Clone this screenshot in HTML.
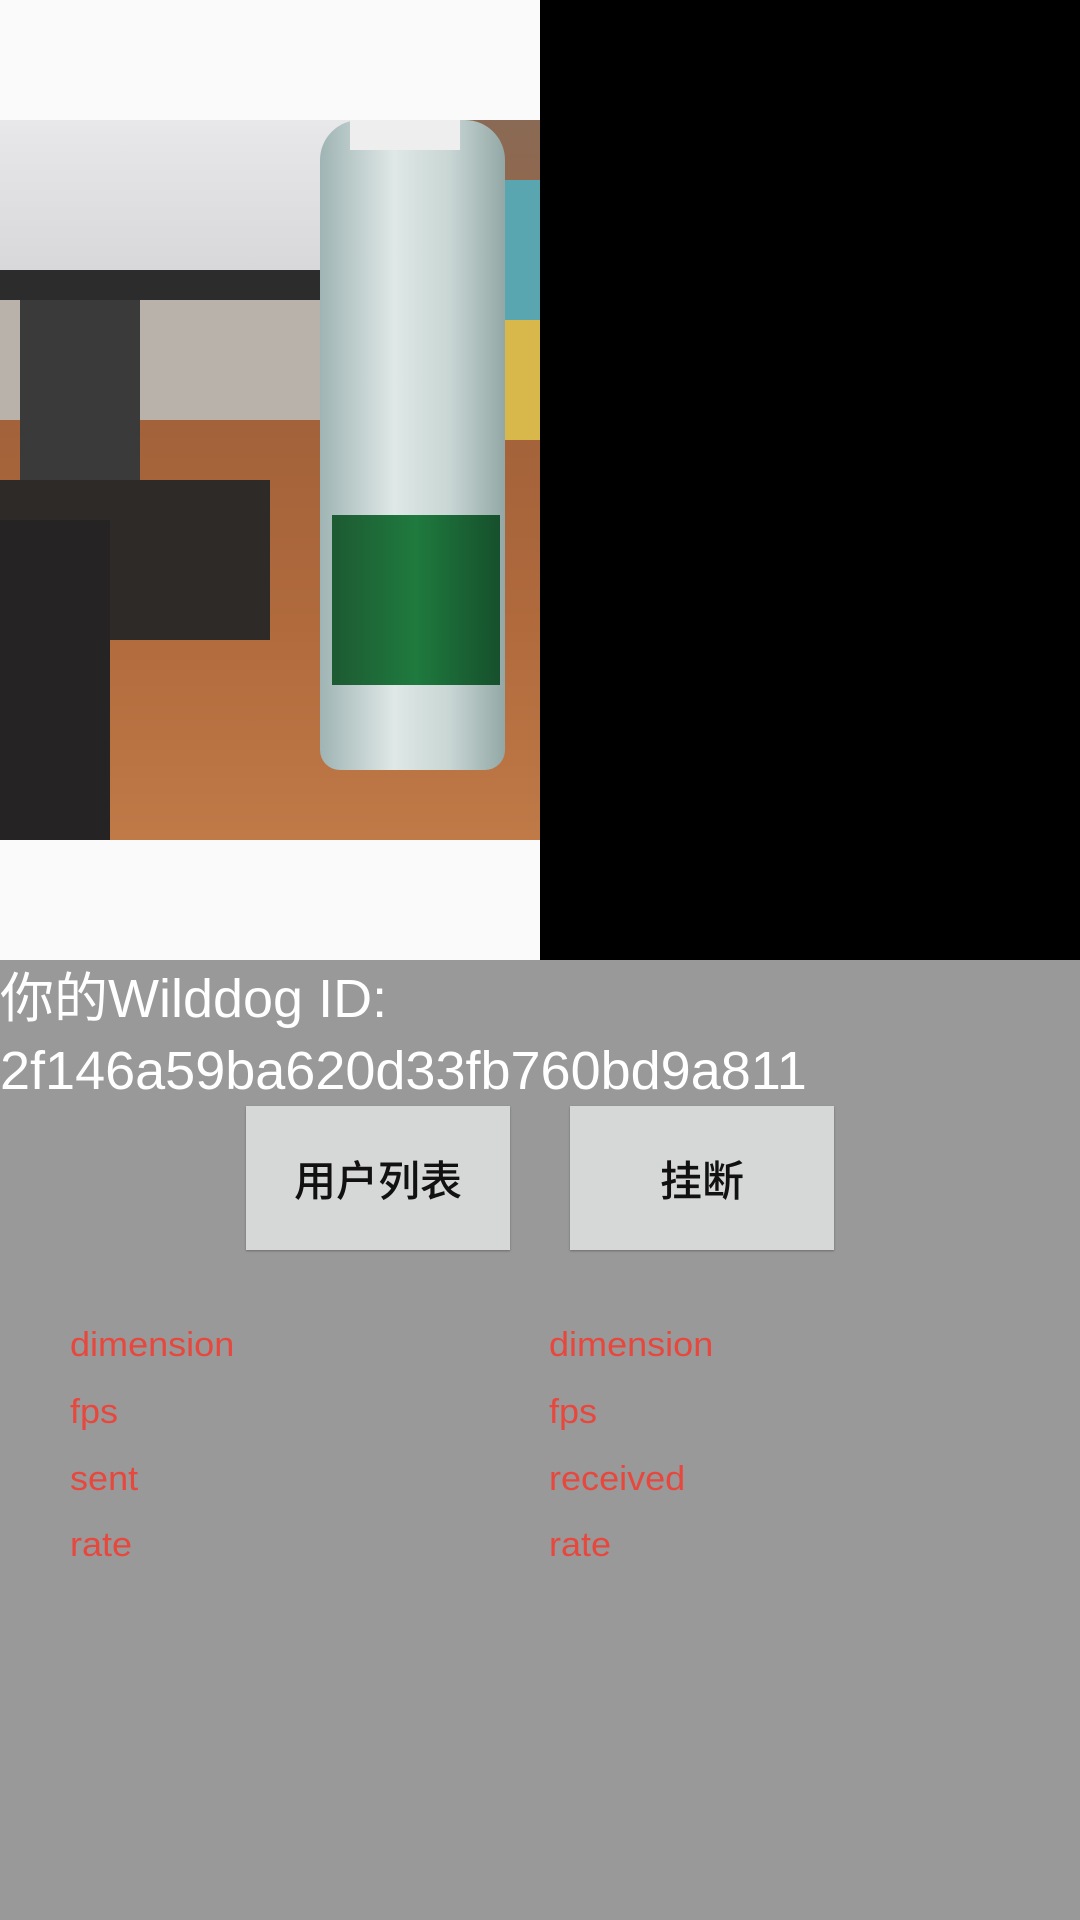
<!DOCTYPE html>
<html><head><meta charset="utf-8"><style>
html,body{margin:0;padding:0;}
body{width:1080px;height:1920px;background:#999999;position:relative;overflow:hidden;font-family:"Liberation Sans","Noto Sans CJK SC",sans-serif;}
.a{position:absolute;}
.id{position:absolute;left:0;color:#fff;font-size:54px;white-space:nowrap;line-height:1;}
.btn{position:absolute;top:1106px;width:264px;height:144px;background:#d6d7d7;box-shadow:0 1px 2px rgba(0,0,0,.3);color:#111;font-size:42px;font-weight:500;display:flex;align-items:center;justify-content:center;font-family:"Noto Sans CJK SC",sans-serif;}
.s{position:absolute;color:#e8473d;font-size:34px;line-height:1;white-space:nowrap;transform-origin:0 0;transform:scaleX(1.06);}
</style></head><body>
<div class="a" style="left:0;top:0;width:540px;height:960px;background:#fafafa"></div>
<div class="a" style="left:540px;top:0;width:540px;height:960px;background:#000"></div>
<div class="a" style="left:0;top:120px;width:540px;height:720px;overflow:hidden;background:linear-gradient(180deg,#8a6a55 0%,#a0603a 35%,#b06a3c 70%,#c07a48 100%)">
 <div class="a" style="left:0;top:0;width:360px;height:150px;background:linear-gradient(180deg,#e8e8ea,#d8d8da)"></div>
 <div class="a" style="left:0;top:150px;width:360px;height:30px;background:#2c2c2c"></div>
 <div class="a" style="left:0;top:180px;width:320px;height:120px;background:#b8b2aa"></div>
 <div class="a" style="left:20px;top:180px;width:120px;height:260px;background:#3a3a3a"></div>
 <div class="a" style="left:0;top:360px;width:270px;height:160px;background:#2e2a28"></div>
 <div class="a" style="left:0;top:400px;width:110px;height:320px;background:#252323"></div>
 <div class="a" style="left:470px;top:60px;width:70px;height:260px;background:#5aa6b0"></div>
 <div class="a" style="left:490px;top:200px;width:50px;height:120px;background:#d8b84a"></div>
 <div class="a" style="left:320px;top:0;width:185px;height:650px;border-radius:40px 40px 20px 20px;background:linear-gradient(90deg,#9fb4b4,#dfe8e6 40%,#c8d6d4 70%,#93a8a6)"></div>
 <div class="a" style="left:350px;top:0;width:110px;height:30px;background:#eee"></div>
 <div class="a" style="left:332px;top:395px;width:168px;height:170px;background:linear-gradient(90deg,#1d5a32,#1f7a3e 50%,#16502c)"></div>
</div>
<div class="id" style="top:972px">你的Wilddog ID:</div>
<div class="id" style="top:1044px">2f146a59ba620d33fb760bd9a811</div>
<div class="btn" style="left:246px">用户列表</div>
<div class="btn" style="left:570px">挂断</div>
<div class="s" style="left:70px;top:1328px">dimension</div>
<div class="s" style="left:70px;top:1395px">fps</div>
<div class="s" style="left:70px;top:1462px">sent</div>
<div class="s" style="left:70px;top:1528px">rate</div>
<div class="s" style="left:549px;top:1328px">dimension</div>
<div class="s" style="left:549px;top:1395px">fps</div>
<div class="s" style="left:549px;top:1462px">received</div>
<div class="s" style="left:549px;top:1528px">rate</div>
</body></html>
